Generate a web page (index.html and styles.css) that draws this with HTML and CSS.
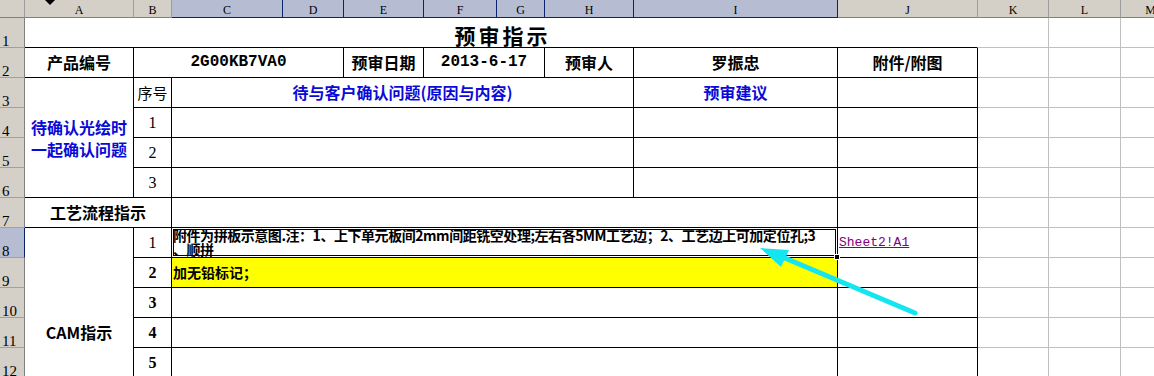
FILE: index.html
```html
<!DOCTYPE html>
<html lang="zh">
<head>
<meta charset="utf-8">
<title>预审指示</title>
<link rel="stylesheet" href="styles.css">
</head>
<body>
<div class="sheet">
  <!-- column headers -->
  <div class="ch"></div>
  <div class="ch col-a">A<span class="shape"></span></div>
  <div class="ch">B</div>
  <div class="ch sel">C</div>
  <div class="ch sel">D</div>
  <div class="ch sel">E</div>
  <div class="ch sel">F</div>
  <div class="ch sel">G</div>
  <div class="ch sel">H</div>
  <div class="ch sel">I</div>
  <div class="ch">J</div>
  <div class="ch">K</div>
  <div class="ch">L</div>
  <div class="ch">M</div>

  <!-- row 1 -->
  <div class="rh">1</div>
  <div class="title s10">预审指示</div>
  <div class="g"></div><div class="g"></div><div class="g"></div>

  <!-- row 2 -->
  <div class="rh">2</div>
  <div class="c">产品编号</div>
  <div class="c mono s3">2G00KB7VA0</div>
  <div class="c">预审日期</div>
  <div class="c mono s2">2013-6-17</div>
  <div class="c">预审人</div>
  <div class="c">罗振忠</div>
  <div class="c">附件/附图</div>
  <div class="g"></div><div class="g"></div><div class="g"></div>

  <!-- row 3 -->
  <div class="rh">3</div>
  <div class="c blue multi r4">待确认光绘时<br>一起确认问题</div>
  <div class="c plain">序号</div>
  <div class="c blue s6">待与客户确认问题(原因与内容)</div>
  <div class="c blue">预审建议</div>
  <div class="c"></div>
  <div class="g"></div><div class="g"></div><div class="g"></div>

  <!-- row 4 -->
  <div class="rh">4</div>
  <div class="c num">1</div>
  <div class="c s6"></div>
  <div class="c"></div>
  <div class="c"></div>
  <div class="g"></div><div class="g"></div><div class="g"></div>

  <!-- row 5 -->
  <div class="rh">5</div>
  <div class="c num">2</div>
  <div class="c s6"></div>
  <div class="c"></div>
  <div class="c"></div>
  <div class="g"></div><div class="g"></div><div class="g"></div>

  <!-- row 6 -->
  <div class="rh">6</div>
  <div class="c num">3</div>
  <div class="c s6"></div>
  <div class="c"></div>
  <div class="c"></div>
  <div class="g"></div><div class="g"></div><div class="g"></div>

  <!-- row 7 -->
  <div class="rh">7</div>
  <div class="c s2">工艺流程指示</div>
  <div class="c s7"></div>
  <div class="c"></div>
  <div class="g"></div><div class="g"></div><div class="g"></div>

  <!-- row 8 -->
  <div class="rh sel">8</div>
  <div class="c r7">CAM指示</div>
  <div class="c num">1</div>
  <div class="c s7 active">
    <div class="wrap">附件为拼板示意图.注：1、上下单元板间2mm间距铣空处理;左右各5MM工艺边；2、工艺边上可加定位孔;3<br>、顺拼</div>
    <span class="handle"></span>
  </div>
  <div class="c link"><u>Sheet2!A1</u></div>
  <div class="g"></div><div class="g"></div><div class="g"></div>

  <!-- row 9 -->
  <div class="rh">9</div>
  <div class="c num bold">2</div>
  <div class="c s7 note yellow">加无铅标记；</div>
  <div class="c"></div>
  <div class="g"></div><div class="g"></div><div class="g"></div>

  <!-- row 10 -->
  <div class="rh">10</div>
  <div class="c num bold">3</div>
  <div class="c s7"></div>
  <div class="c"></div>
  <div class="g"></div><div class="g"></div><div class="g"></div>

  <!-- row 11 -->
  <div class="rh">11</div>
  <div class="c num bold">4</div>
  <div class="c s7"></div>
  <div class="c"></div>
  <div class="g"></div><div class="g"></div><div class="g"></div>

  <!-- row 12 -->
  <div class="rh">12</div>
  <div class="c num bold">5</div>
  <div class="c s7"></div>
  <div class="c"></div>
  <div class="g"></div><div class="g"></div><div class="g"></div>

  <!-- row 13 -->
  <div class="rh"></div>
  <div class="c num bold"></div>
  <div class="c s7"></div>
  <div class="c"></div>
  <div class="g"></div><div class="g"></div><div class="g"></div>

  <!-- row 14 -->
  <div class="rh"></div>
  <div class="c num bold"></div>
  <div class="c s7"></div>
  <div class="c"></div>
  <div class="g"></div><div class="g"></div><div class="g"></div>

  <svg class="arrow" width="1154" height="376" viewBox="0 0 1154 376">
    <line x1="915" y1="313" x2="780" y2="256" stroke="#14e6ef" stroke-width="5" stroke-linecap="round"/>
    <polygon points="760,248 789,250 781,267" fill="#14e6ef"/>
  </svg>
</div>
</body>
</html>
```

FILE: styles.css
```css
html, body {
  margin: 0;
  padding: 0;
  background: #fff;
  overflow: hidden;
}

body {
  width: 1154px;
  height: 376px;
  font-family: "Noto Sans CJK SC", sans-serif;
  color: #000;
}

.sheet {
  position: relative;
  display: grid;
  grid-template-columns: 25px 109px 38px 111px 61px 80px 73px 48px 89px 204px 140px 71px 72px 60px;
  grid-template-rows: 18px repeat(14, 30px);
}

.sheet > div {
  box-sizing: border-box;
  border-right: 1px solid #c0c0c0;
  border-bottom: 1px solid #c0c0c0;
  display: flex;
  align-items: center;
  justify-content: center;
  overflow: hidden;
  white-space: nowrap;
  line-height: 1.2;
}

/* spans */
.s2 { grid-column: span 2; }
.s3 { grid-column: span 3; }
.s6 { grid-column: span 6; }
.s7 { grid-column: span 7; }
.s10 { grid-column: span 10; }
.r4 { grid-row: span 4; }
.r7 { grid-row: span 7; }

/* headers */
.sheet > .ch {
  background: #d4d0c8;
  border-right-color: #9d9d9d;
  border-bottom-color: #808080;
  font: 12px/12px "Liberation Serif", serif;
  align-items: flex-end;
  padding-bottom: 1px;
  color: #000;
}

.sheet > .ch.sel {
  background: #b6bdd2;
  border-right-color: #0a246a;
  border-bottom-color: #0a246a;
}

.col-a {
  position: relative;
}

.shape {
  position: absolute;
  left: 20px;
  top: 0;
  width: 0;
  height: 0;
  border-left: 5px solid transparent;
  border-right: 5px solid transparent;
  border-top: 5px solid #000;
}

.sheet > .rh {
  background: #d4d0c8;
  border-right-color: #808080;
  border-bottom-color: #a0a0a0;
  font: 15px/12px "Liberation Serif", serif;
  justify-content: flex-start;
  align-items: flex-end;
  padding-left: 2px;
}

.sheet > .rh.sel {
  background: #b6bdd2;
  border-right-color: #0a246a;
}

/* cells */
.sheet > .g {
  background: #fff;
}

.sheet > .title {
  border-right-color: transparent;
  border-bottom-color: #000;
  font-size: 21px;
  font-weight: bold;
  letter-spacing: 3px;
  line-height: 24px;
  align-items: flex-end;
  padding-left: 3px;
  overflow: visible;
}

.sheet > .c {
  border-right-color: #000;
  border-bottom-color: #000;
  font-size: 16px;
  font-weight: bold;
}

.mono {
  font-family: "Liberation Mono", monospace;
  font-size: 15px;
}

.blue {
  color: #0a0ad8;
}

.sheet > .multi {
  white-space: normal;
  text-align: center;
  line-height: 22px;
}

.sheet > .plain {
  font-weight: normal;
  font-size: 15px;
}

.sheet > .num {
  font-family: "Liberation Serif", serif;
  font-weight: normal;
  font-size: 16px;
}

.sheet > .num.bold {
  font-weight: bold;
}

.sheet > .active {
  position: relative;
  overflow: visible;
  align-items: flex-start;
  justify-content: flex-start;
  box-shadow: inset 0 0 0 1px #fff, inset 0 0 0 2px #000;
}

.wrap {
  font-size: 14px;
  line-height: 14px;
  letter-spacing: -0.45px;
  white-space: nowrap;
  padding-left: 1px;
  max-width: 100%;
}

.handle {
  position: absolute;
  right: -3px;
  bottom: -3px;
  width: 6px;
  height: 6px;
  box-sizing: border-box;
  background: #000;
  border: 1px solid #fff;
  z-index: 2;
}

.sheet > .note {
  justify-content: flex-start;
  font-size: 14px;
  padding-left: 1px;
}

.yellow {
  background: #ffff00;
}

.sheet > .link {
  justify-content: flex-start;
  padding-left: 1px;
  font-family: "Liberation Mono", monospace;
  font-weight: normal;
  font-size: 13px;
  color: #800080;
}

.arrow {
  position: absolute;
  left: 0;
  top: 0;
  pointer-events: none;
  z-index: 3;
}
```
